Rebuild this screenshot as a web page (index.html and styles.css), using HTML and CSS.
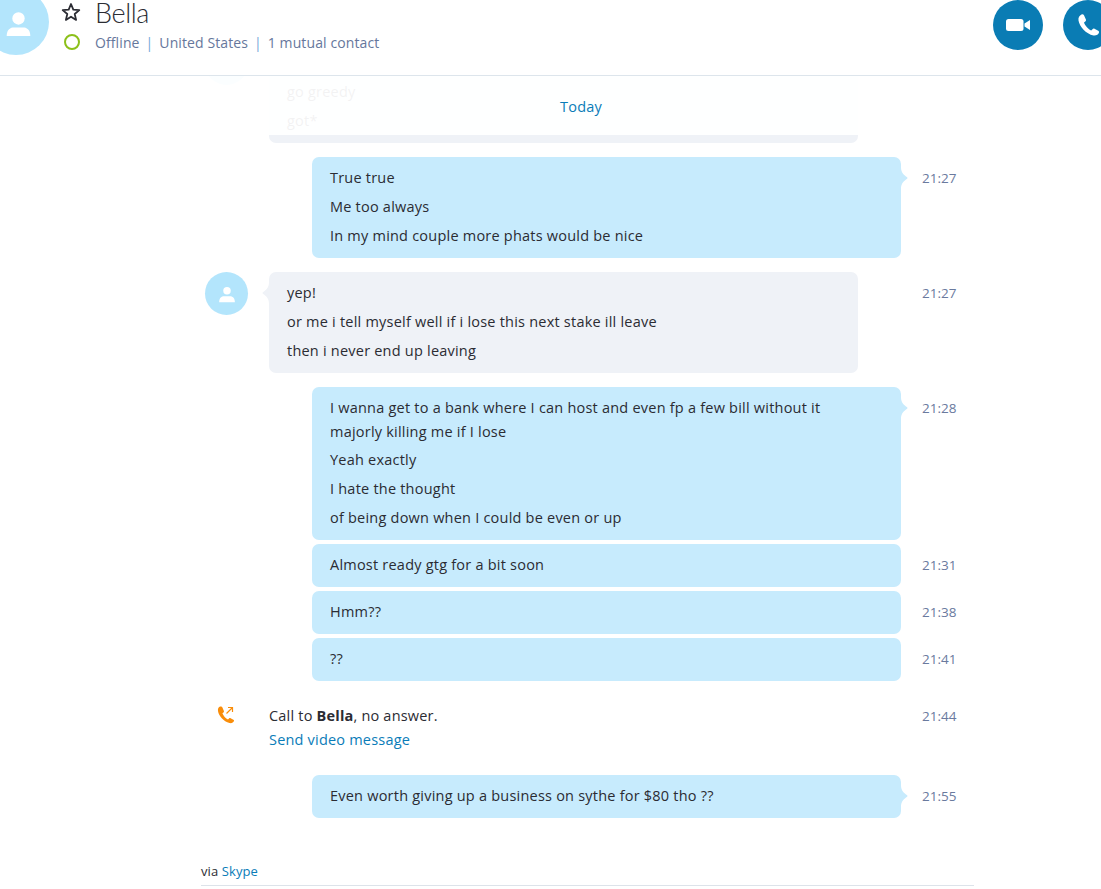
FILE: index.html
```html
<!DOCTYPE html>
<html>
  <head>
    <meta charset="utf-8">
    <title>Bella</title>
    <link rel="stylesheet" href="styles.css">
  </head>
  <body>
    <div class="header">
      <div class="avatar-big">
        <svg viewBox="0 0 24 24" width="27" height="27"><circle cx="12" cy="7.500" r="5.500" fill="#fff"/><path d="M1.500 23 C1.500 17 5 15.500 8 15.500 H16 C19 15.500 22.500 17 22.500 23 Z" fill="#fff"/></svg>
      </div>
      <div class="marks">
        <svg class="star" viewBox="0 0 20 20" width="20" height="20"><path d="M10 2 L12.300 7.600 L18.300 8.100 L13.700 12 L15.100 17.900 L10 14.700 L4.900 17.900 L6.300 12 L1.700 8.100 L7.700 7.600 Z" fill="none" stroke="#2b2c33" stroke-width="1.800" stroke-linejoin="round"/></svg>
        <span class="presence"></span>
      </div>
      <div class="who">
        <div class="name">Bella</div>
        <div class="meta">Offline<i>|</i>United States<i>|</i>1 mutual contact</div>
      </div>
      <div class="calls">
        <div class="callbtn">
          <svg viewBox="0 0 24 12" width="24" height="12"><rect x="0" y="0" width="17.500" height="12" rx="2.500" fill="#fff"/><path d="M18.500 4.500 L24 1 V11 L18.500 7.500 Z" fill="#fff"/></svg>
        </div>
        <div class="callbtn">
          <svg viewBox="0 0 24 24" width="24" height="24"><path d="M5.500 1.500 C3.500 2.500 2 4.500 2.500 7.500 C3.500 13.500 10 21 17.500 22.500 C20 23 22.500 21.500 23 19.500 C23.200 18.800 22.800 18.200 22.200 17.800 L18.500 15.800 C17.800 15.400 17 15.600 16.500 16.200 L15.200 17.600 C12.500 16.500 9 12.500 8 9.500 L9.300 8.500 C10 8 10.200 7.200 9.900 6.500 L8 2.200 C7.600 1.400 6.400 1 5.500 1.500 Z" fill="#fff"/></svg>
        </div>
      </div>
    </div>

    <div class="chat">
      <div class="fade"><span class="today">Today</span></div>

      <div class="row first">
        <div class="avatar"></div>
        <div class="bubble in">
          <p>&nbsp;</p>
          <p>go greedy</p>
          <p>got*</p>
        </div>
      </div>

      <div class="row">
        <div class="bubble out tail">
          <p>True true</p>
          <p>Me too always</p>
          <p>In my mind couple more phats would be nice</p>
        </div>
        <div class="time">21:27</div>
      </div>

      <div class="row">
        <div class="avatar">
          <svg viewBox="0 0 24 24" width="18" height="18"><circle cx="12" cy="7.500" r="5" fill="#fff"/><path d="M1.500 23 C1.500 17 5 15 8 15 H16 C19 15 22.500 17 22.500 23 Z" fill="#fff"/></svg>
        </div>
        <div class="bubble in tail">
          <p>yep!</p>
          <p>or me i tell myself well if i lose this next stake ill leave</p>
          <p>then i never end up leaving</p>
        </div>
        <div class="time">21:27</div>
      </div>

      <div class="row">
        <div class="bubble out tail wrapped">
          <p>I wanna get to a bank where I can host and even fp a few bill without it majorly killing me if I lose</p>
          <p>Yeah exactly</p>
          <p>I hate the thought</p>
          <p>of being down when I could be even or up</p>
        </div>
        <div class="time">21:28</div>
      </div>

      <div class="row tight">
        <div class="bubble out"><p>Almost ready gtg for a bit soon</p></div>
        <div class="time">21:31</div>
      </div>

      <div class="row tight">
        <div class="bubble out"><p>Hmm??</p></div>
        <div class="time">21:38</div>
      </div>

      <div class="row tight">
        <div class="bubble out"><p>??</p></div>
        <div class="time">21:41</div>
      </div>

      <div class="row call">
        <div class="callicon">
          <svg viewBox="0 0 20 20" width="20" height="20"><path d="M4.200 1.600 C2.600 2.200 1.600 3.700 2 6 C2.800 11 7.500 16.500 13.500 18 C15.500 18.500 17.500 17.500 18 16 C18.200 15.400 17.900 15 17.400 14.700 L14.600 13.200 C14 12.900 13.400 13 13 13.500 L12 14.600 C9.800 13.700 7.200 10.700 6.400 8.300 L7.500 7.400 C8 7 8.100 6.400 7.900 5.900 L6.400 2.500 C6.100 1.800 5 1.300 4.200 1.600 Z" fill="#f98d0a"/><path d="M10.500 8.500 L16.500 2.500 M12 2.500 H16.500 V7" fill="none" stroke="#f98d0a" stroke-width="1.200"/></svg>
        </div>
        <div class="calltext">
          <div>Call to <b>Bella</b>, no answer.</div>
          <a href="#">Send video message</a>
        </div>
        <div class="time">21:44</div>
      </div>

      <div class="row last">
        <div class="bubble out tail"><p>Even worth giving up a business on sythe for $80 tho ??</p></div>
        <div class="time">21:55</div>
      </div>

      <div class="via">via <a href="#">Skype</a></div>
    </div>
  </body>
</html>
```

FILE: styles.css
```css
* {box-sizing: border-box;}

html, body {
  height: 889px;
  overflow: hidden;
}

body {
  margin: 0;
  background-color: #fff;
  color: #2b2c33;
  font-family: "Open Sans", "Noto Sans", sans-serif;
  font-size: 14px;
}

a {
  color: #0a7cb8;
  text-decoration: none;
}

/* header */

.header {
  display: flex;
  height: 76px;
  border-bottom: 1px solid #dde5ec;
  overflow: hidden;
}

.avatar-big {
  display: flex;
  flex: none;
  align-items: center;
  justify-content: center;
  width: 66px;
  height: 66px;
  margin: -11px 0 0 -17px;
  padding: 2px 0 0 4px;
  border-radius: 50%;
  background-color: #b3e5fc;
}

.marks {
  display: flex;
  flex: none;
  flex-direction: column;
  align-items: center;
  width: 20px;
  margin-left: 13px;
  padding-top: 2px;
}

.star {
  margin-right: 2px;
}

.presence {
  width: 16px;
  height: 16px;
  margin-top: 12px;
  border: 2px solid #8cc01a;
  border-radius: 50%;
}

.who {
  margin-left: 13px;
}

.name {
  font-family: Lato, "Open Sans", sans-serif;
  font-size: 27px;
  font-weight: 300;
  letter-spacing: -.4px;
  line-height: 25px;
}

.meta {
  margin-top: 8px;
  color: #66779c;
  letter-spacing: .1px;
  line-height: 20px;
}

.meta i {
  margin: 0 6px;
  color: #74a8d8;
  font-style: normal;
}

.calls {
  display: flex;
  flex: none;
  gap: 20px;
  margin: 0 -12px 0 auto;
}

.callbtn {
  display: flex;
  align-items: center;
  justify-content: center;
  width: 50px;
  height: 50px;
  border-radius: 50%;
  background-color: #0a7cb4;
}

/* messages */

.chat {
  position: relative;
  height: 813px;
  padding-left: 205px;
  overflow: hidden;
}

.fade {
  position: absolute;
  top: 0;
  left: 0;
  z-index: 1;
  width: 100%;
  height: 59px;
  padding-top: 19px;
  background-color: rgba(255,255,255,.94);
  color: #0a7cb8;
  font-size: 14.500px;
  letter-spacing: .2px;
  line-height: 24px;
  text-align: center;
}

.today {
  margin-left: 61px;
}

.row {
  display: grid;
  grid-template-columns: 64px 632px 21px 60px;
  margin-top: 14px;
}

.row.first {
  margin-top: -34px;
}

.row.tight {
  margin-top: 4px;
}

.row.call {
  margin-top: 23px;
}

.row.last {
  margin-top: 23px;
}

.avatar {
  display: flex;
  grid-column: 1;
  align-items: center;
  justify-content: center;
  width: 43px;
  height: 43px;
  border-radius: 50%;
  background-color: #b3e5fc;
}

.bubble {
  position: relative;
  grid-column: 2;
  width: 589px;
  padding: 9px 40px 10px 18px;
  border-radius: 7px;
  font-size: 14.500px;
  letter-spacing: .22px;
  line-height: 24px;
}

.bubble p {
  margin: 0 0 5px;
}

.bubble p:last-child {
  margin-bottom: 0;
}

.wrapped p:first-child {
  margin-bottom: 4px;
}

.in {
  background-color: #eff2f7;
}

.out {
  justify-self: end;
  background-color: #c7ebfd;
}

.tail::after {
  content: "";
  position: absolute;
  top: 10px;
  width: 7px;
  height: 22px;
  background-color: inherit;
  clip-path: path("M0 0 C0 5 2 7 5 9.500 C7 10.500 7 11.500 5 12.500 C2 15 0 17 0 22 Z");
}

.out.tail::after {
  left: 100%;
}

.in.tail::after {
  right: 100%;
  transform: scaleX(-1);
}

.time {
  grid-column: 4;
  padding-top: 9px;
  color: #6a7a9e;
  font-size: 13.500px;
  line-height: 24px;
}

.callicon {
  grid-column: 1;
  padding: 1px 0 0 11px;
}

.calltext {
  grid-column: 2;
  font-size: 14.500px;
  letter-spacing: .2px;
  line-height: 24px;
}

.calltext b {
  font-weight: 700;
}

.row.call .time {
  padding-top: 0;
}

.via {
  width: 773px;
  height: 27px;
  margin: 41px 0 0 -4px;
  border-bottom: 1px solid #dde3ea;
  font-size: 13px;
  letter-spacing: .1px;
  line-height: 24px;
}
```
